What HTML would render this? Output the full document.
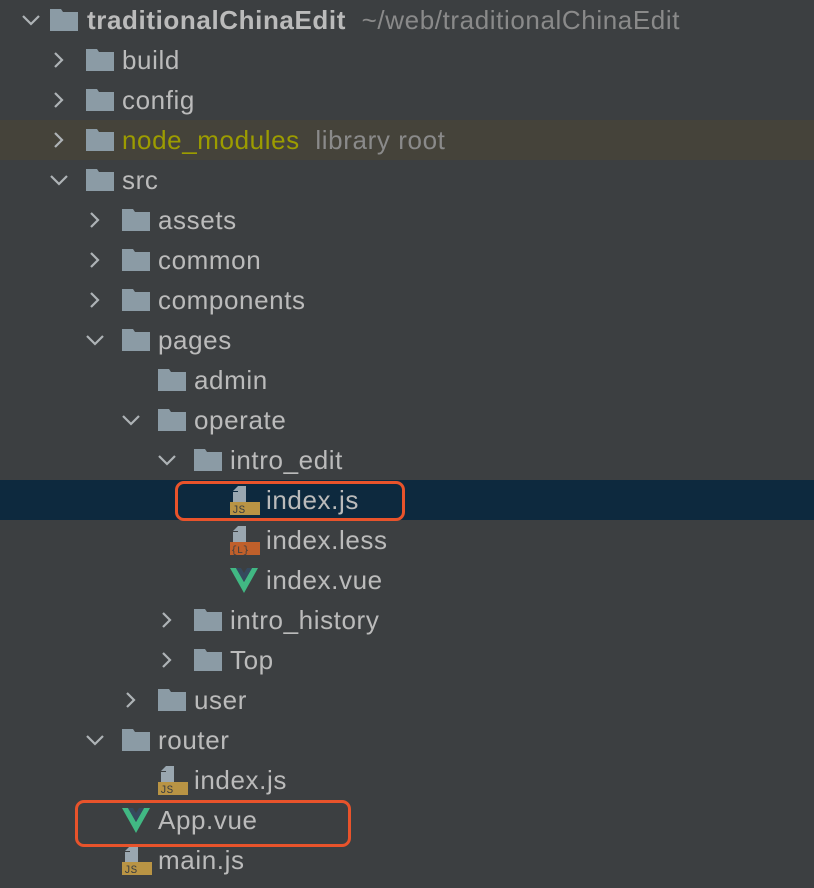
<!DOCTYPE html><html><head><meta charset="utf-8"><style>
body{margin:0;width:814px;height:888px;background:#3c3f41;overflow:hidden;font-family:"Liberation Sans",sans-serif;position:relative}
.r{position:absolute;left:0;width:814px;height:40px}
.t{position:absolute;top:5px;font-size:26px;letter-spacing:0.6px;color:#bbbbbb;line-height:30px;white-space:nowrap}
.c{position:absolute;top:11px;width:18px;height:18px}
.f{position:absolute;top:9px;width:28px;height:22px}
.g{color:#8a8a8a}
.fi{position:absolute;top:5px;width:30px;height:30px}
.box{position:absolute;border:3px solid #e8532b;border-radius:9px;box-sizing:border-box}
</style></head><body>
<svg width="0" height="0" style="position:absolute">
<defs>
<symbol id="fold" viewBox="0 0 28 22"><path d="M0 0H11L13 3H28V22H0Z" fill="#8b9ba5"/></symbol>
<symbol id="cr" viewBox="0 0 18 18"><path d="M5 2L12 9L5 16" fill="none" stroke="#aeb3b6" stroke-width="2.2"/></symbol>
<symbol id="cd" viewBox="0 0 18 18"><path d="M1 5L9 13L17 5" fill="none" stroke="#aeb3b6" stroke-width="2.2"/></symbol>
<symbol id="vue" viewBox="0 0 28 26"><path d="M0 0H6L14 14L22 0H28L14 25Z" fill="#41b883"/><path d="M6 0H11L14 5L17 0H22L14 14Z" fill="#35495e"/></symbol>
</defs></svg>

<div class="r" style="top:120px;background:#45433a"></div>
<div class="r" style="top:480px;background:#0d293e"></div>

<div class="r" style="top:0"><svg class="c" style="left:22px"><use href="#cd"/></svg><svg class="f" style="left:50px"><use href="#fold"/></svg><span class="t" style="left:87px;font-weight:bold">traditionalChinaEdit <span class="g" style="font-weight:normal">&nbsp;~/web/traditionalChinaEdit</span></span></div>
<div class="r" style="top:40px"><svg class="c" style="left:50px"><use href="#cr"/></svg><svg class="f" style="left:86px"><use href="#fold"/></svg><span class="t" style="left:122px">build</span></div>
<div class="r" style="top:80px"><svg class="c" style="left:50px"><use href="#cr"/></svg><svg class="f" style="left:86px"><use href="#fold"/></svg><span class="t" style="left:122px">config</span></div>
<div class="r" style="top:120px"><svg class="c" style="left:50px"><use href="#cr"/></svg><svg class="f" style="left:86px"><use href="#fold"/></svg><span class="t" style="left:122px;color:#9c9c00">node_modules <span class="g">&nbsp;library root</span></span></div>
<div class="r" style="top:160px"><svg class="c" style="left:50px"><use href="#cd"/></svg><svg class="f" style="left:86px"><use href="#fold"/></svg><span class="t" style="left:122px">src</span></div>
<div class="r" style="top:200px"><svg class="c" style="left:86px"><use href="#cr"/></svg><svg class="f" style="left:122px"><use href="#fold"/></svg><span class="t" style="left:158px">assets</span></div>
<div class="r" style="top:240px"><svg class="c" style="left:86px"><use href="#cr"/></svg><svg class="f" style="left:122px"><use href="#fold"/></svg><span class="t" style="left:158px">common</span></div>
<div class="r" style="top:280px"><svg class="c" style="left:86px"><use href="#cr"/></svg><svg class="f" style="left:122px"><use href="#fold"/></svg><span class="t" style="left:158px">components</span></div>
<div class="r" style="top:320px"><svg class="c" style="left:86px"><use href="#cd"/></svg><svg class="f" style="left:122px"><use href="#fold"/></svg><span class="t" style="left:158px">pages</span></div>
<div class="r" style="top:360px"><svg class="f" style="left:158px"><use href="#fold"/></svg><span class="t" style="left:194px">admin</span></div>
<div class="r" style="top:400px"><svg class="c" style="left:122px"><use href="#cd"/></svg><svg class="f" style="left:158px"><use href="#fold"/></svg><span class="t" style="left:194px">operate</span></div>
<div class="r" style="top:440px"><svg class="c" style="left:158px"><use href="#cd"/></svg><svg class="f" style="left:194px"><use href="#fold"/></svg><span class="t" style="left:230px">intro_edit</span></div>

<div class="r" style="top:480px"><svg class="fi" style="left:230px" viewBox="0 0 30 30"><path d="M8 1H16V17H8Z M3 6L8 1V6Z" fill="#9aa7b0"/><path d="M3 7H8V17H3Z" fill="#9aa7b0"/><rect x="0" y="17" width="30" height="13" fill="#b99444"/><text x="2" y="28" font-size="11" font-family="Liberation Mono,monospace" fill="#3c3f41">JS</text></svg><span class="t" style="left:266px">index.js</span></div>
<div class="r" style="top:520px"><svg class="fi" style="left:230px" viewBox="0 0 30 30"><path d="M8 1H16V17H8Z M3 6L8 1V6Z" fill="#9aa7b0"/><path d="M3 7H8V17H3Z" fill="#9aa7b0"/><rect x="0" y="17" width="30" height="13" fill="#c0602b"/><text x="1" y="28" font-size="10" font-family="Liberation Mono,monospace" fill="#3c3f41">{L}</text></svg><span class="t" style="left:266px">index.less</span></div>
<div class="r" style="top:560px"><svg class="fi" style="left:230px;top:8px;height:26px;width:28px"><use href="#vue"/></svg><span class="t" style="left:266px">index.vue</span></div>

<div class="r" style="top:600px"><svg class="c" style="left:158px"><use href="#cr"/></svg><svg class="f" style="left:194px"><use href="#fold"/></svg><span class="t" style="left:230px">intro_history</span></div>
<div class="r" style="top:640px"><svg class="c" style="left:158px"><use href="#cr"/></svg><svg class="f" style="left:194px"><use href="#fold"/></svg><span class="t" style="left:230px">Top</span></div>
<div class="r" style="top:680px"><svg class="c" style="left:122px"><use href="#cr"/></svg><svg class="f" style="left:158px"><use href="#fold"/></svg><span class="t" style="left:194px">user</span></div>
<div class="r" style="top:720px"><svg class="c" style="left:86px"><use href="#cd"/></svg><svg class="f" style="left:122px"><use href="#fold"/></svg><span class="t" style="left:158px">router</span></div>
<div class="r" style="top:760px"><svg class="fi" style="left:158px" viewBox="0 0 30 30"><path d="M8 1H16V17H8Z M3 6L8 1V6Z" fill="#9aa7b0"/><path d="M3 7H8V17H3Z" fill="#9aa7b0"/><rect x="0" y="17" width="30" height="13" fill="#b99444"/><text x="2" y="28" font-size="11" font-family="Liberation Mono,monospace" fill="#3c3f41">JS</text></svg><span class="t" style="left:194px">index.js</span></div>
<div class="r" style="top:800px"><svg class="fi" style="left:122px;top:8px;height:26px;width:28px"><use href="#vue"/></svg><span class="t" style="left:158px">App.vue</span></div>
<div class="r" style="top:840px"><svg class="fi" style="left:122px" viewBox="0 0 30 30"><path d="M8 1H16V17H8Z M3 6L8 1V6Z" fill="#9aa7b0"/><path d="M3 7H8V17H3Z" fill="#9aa7b0"/><rect x="0" y="17" width="30" height="13" fill="#b99444"/><text x="2" y="28" font-size="11" font-family="Liberation Mono,monospace" fill="#3c3f41">JS</text></svg><span class="t" style="left:158px">main.js</span></div>

<div class="box" style="left:175px;top:481px;width:230px;height:40px"></div>
<div class="box" style="left:75px;top:800px;width:276px;height:47px"></div>
</body></html>
